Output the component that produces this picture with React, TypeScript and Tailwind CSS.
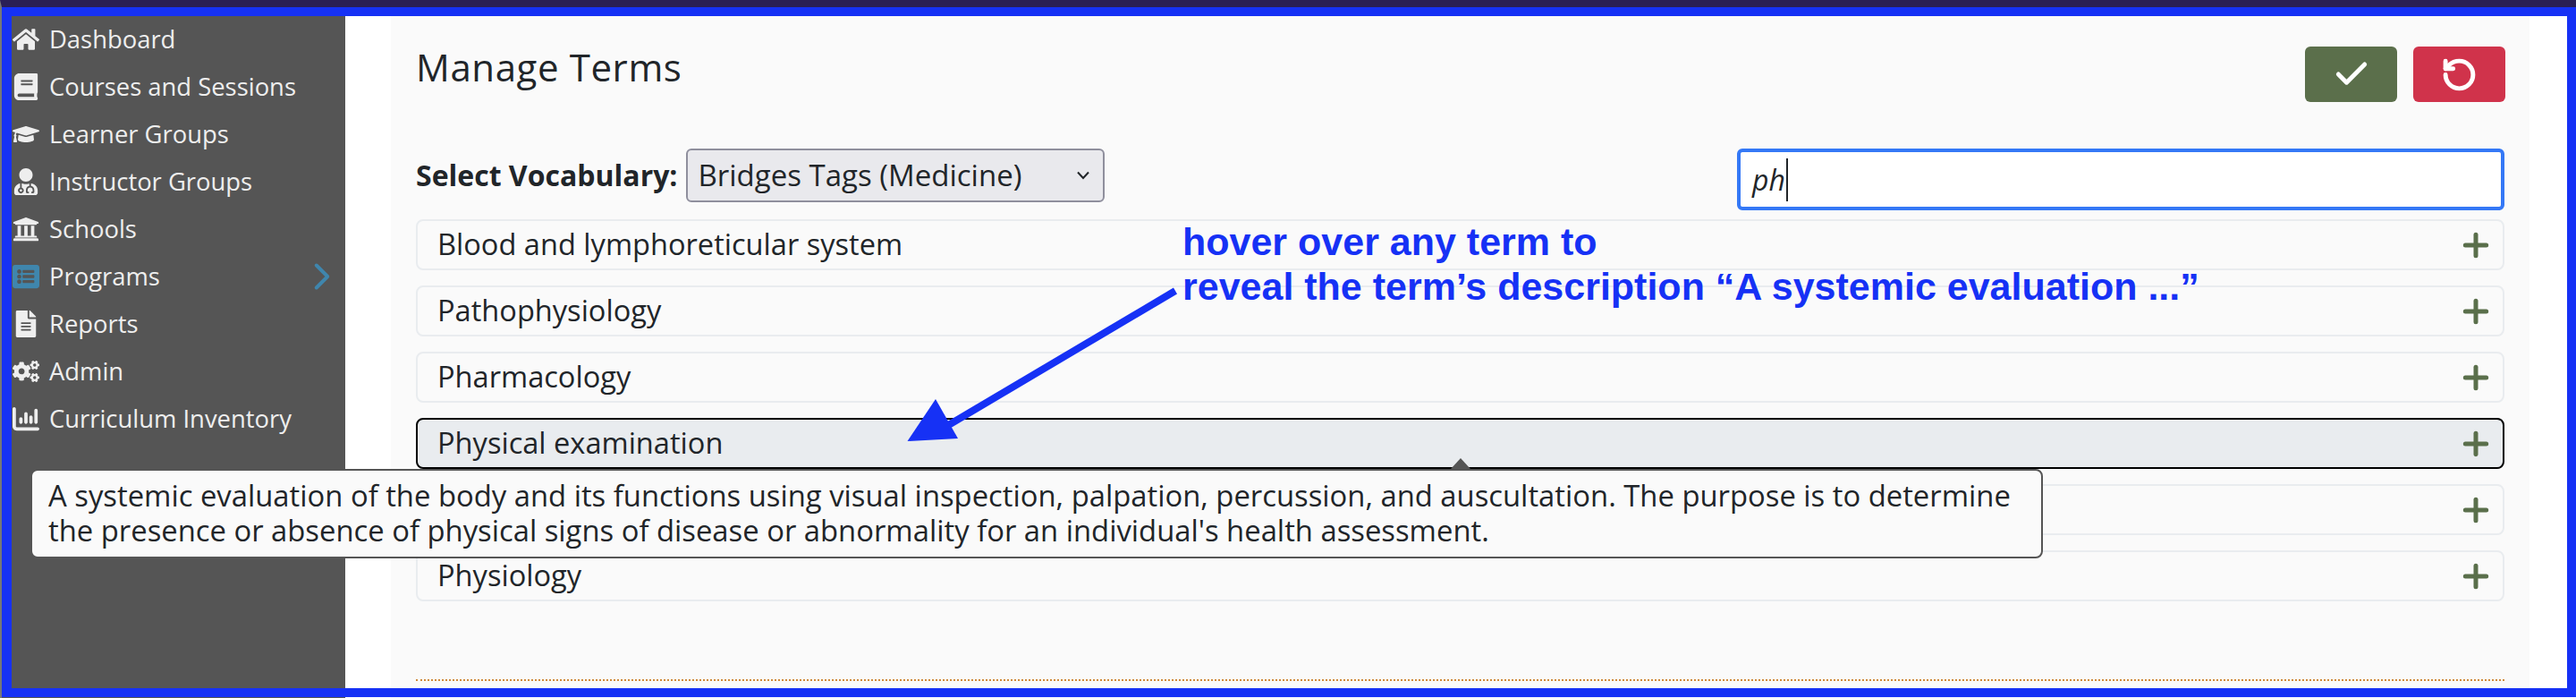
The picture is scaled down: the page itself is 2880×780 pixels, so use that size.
import { Check, ChevronRight, Plus, RotateCcw } from 'lucide-react';
import { FaBook, FaCogs, FaFileAlt, FaGraduationCap, FaHome, FaListAlt, FaUniversity, FaUserMd } from 'react-icons/fa';
import { FaChartColumn } from 'react-icons/fa6';

const nav = [
  { label: 'Dashboard', icon: FaHome },
  { label: 'Courses and Sessions', icon: FaBook },
  { label: 'Learner Groups', icon: FaGraduationCap },
  { label: 'Instructor Groups', icon: FaUserMd },
  { label: 'Schools', icon: FaUniversity },
  { label: 'Programs', icon: FaListAlt, active: true },
  { label: 'Reports', icon: FaFileAlt },
  { label: 'Admin', icon: FaCogs },
  { label: 'Curriculum Inventory', icon: FaChartColumn },
];

const terms = [
  { label: 'Blood and lymphoreticular system' },
  { label: 'Pathophysiology' },
  { label: 'Pharmacology' },
  { label: 'Physical examination', hovered: true },
  { label: '' },
  { label: 'Physiology' },
];

function Sidebar() {
  return (
    <nav className="w-[386px] shrink-0 bg-[#555555] text-[27.4px] leading-[53px] text-[#eeeeee]">
      <div className="mt-[-1px]">
        {nav.map((item) => (
          <div key={item.label} className="flex h-[53px] items-center">
            <span className="flex w-[55px] shrink-0 justify-center pl-[2px]">
              <item.icon className={item.active ? 'text-[#3f86ad]' : 'text-[#eeeeee]'} size={30} />
            </span>
            <span className="flex-1">{item.label}</span>
            {item.active && <ChevronRight className="mr-[1px] text-[#3f86ad]" size={50} strokeWidth={1.9} />}
          </div>
        ))}
      </div>
    </nav>
  );
}

function TermRow({ label, hovered }: { label: string; hovered?: boolean }) {
  return (
    <div
      className={`flex h-[57px] items-center justify-between rounded-lg border-2 pl-[22px] pr-[10px] ${
        hovered ? 'border-black bg-[#e9ecef]' : 'border-[#e9ecef]'
      }`}
    >
      <span>{label}</span>
      <Plus className="text-[#5a6f4b]" size={40} strokeWidth={3} />
    </div>
  );
}

export default function App() {
  return (
    <div className="relative flex h-[780px] w-[2880px] overflow-hidden bg-white pt-[18px] font-['Open_Sans','Noto_Sans',sans-serif] text-[#212529]">
      <Sidebar />
      <main className="ml-[51px] w-[2391px] bg-[#fafafa] px-[28px] pt-[34px]">
        <div className="flex items-start justify-between">
          <h1 className="text-[42px] leading-[46px] font-medium tracking-[0.6px]">Manage Terms</h1>
          <div className="mr-[-1px] flex gap-[18px]">
            <button className="flex h-[62px] w-[103px] items-center justify-center rounded-md bg-[#5b6f4b] text-white">
              <Check size={44} strokeWidth={2.7} />
            </button>
            <button className="flex h-[62px] w-[103px] items-center justify-center rounded-md bg-[#d0334b] text-white">
              <RotateCcw size={41} strokeWidth={2.9} />
            </button>
          </div>
        </div>

        <div className="mt-[52px] flex items-start justify-between">
          <div className="flex items-center gap-[10px]">
            <span className="text-[32px] font-bold">Select Vocabulary:</span>
            <div className="flex h-[60px] w-[468px] items-center justify-between rounded-md border-2 border-[#8f8f9d] bg-[#e9e9ed] pl-[11px] pr-[14px] text-[33px]">
              <span>Bridges Tags (Medicine)</span>
              <svg width="16" height="10" viewBox="0 0 16 10" fill="none" stroke="#212529" strokeWidth="2">
                <path d="M2 1.5 8 8l6-6.5" />
              </svg>
            </div>
          </div>
          <div className="flex h-[69px] w-[858px] items-center rounded-md border-[4px] border-[#3478f6] bg-white pl-[13px] text-[32px] italic">
            <span>ph</span>
            <span className="ml-[1px] h-[48px] w-[2px] bg-[#212529]" />
          </div>
        </div>

        <div className="mt-[10px] flex flex-col gap-[17px] text-[32.6px]">
          {terms.map((term, i) => (
            <TermRow key={i} label={term.label} hovered={term.hovered} />
          ))}
        </div>

        <div className="mt-[87px] border-t-2 border-dotted border-[#cf8a3c]" />
      </main>

      {/* tooltip over the hovered term */}
      <div className="absolute top-[524px] left-[34px] h-[100px] w-[2250px] rounded-lg border-2 border-[#555555] bg-[#fafafa] px-[18px] pt-[8px] text-[32.8px] leading-[39px]">
        A systemic evaluation of the body and its functions using visual inspection, palpation, percussion, and
        auscultation. The purpose is to determine
        <br />
        the presence or absence of physical signs of disease or abnormality for an individual's health assessment.
      </div>
      <div className="absolute top-[512px] left-[1622px] h-0 w-0 border-x-[11px] border-b-[12px] border-x-transparent border-b-[#555555]" />

      {/* annotation */}
      <div className="absolute top-[245px] left-[1322px] font-['Liberation_Sans',sans-serif] text-[43px] leading-[50px] font-bold text-[#1631f5]">
        hover over any term to
        <br />
        reveal the term’s description “A systemic evaluation ...”
      </div>
      <svg className="absolute top-0 left-0" width="2880" height="780" fill="none">
        <path d="M1314 325 1052 480" stroke="#1631f5" strokeWidth="8" />
        <path d="M1014.5 493 1046 446 1071 490Z" fill="#1631f5" />
      </svg>

      {/* blue screenshot frame */}
      <div className="pointer-events-none absolute top-0 left-0 h-[780px] w-[2880px] border-t-[8px] border-l-[2px] border-t-[#2a1f55] border-l-[#777777]">
        <div className="h-[771px] w-[2878px] border-[10px] border-[#1631f5] border-l-[11px]" />
      </div>
    </div>
  );
}
